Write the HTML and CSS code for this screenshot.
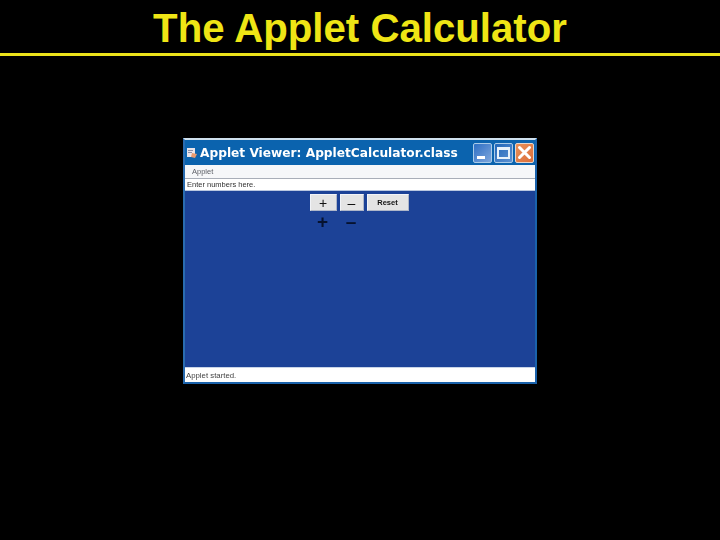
FILE: index.html
```html
<!DOCTYPE html>
<html lang="en">
<head>
<meta charset="utf-8">
<title>The Applet Calculator</title>
<link rel="stylesheet" href="styles.css">
</head>
<body>
<header class="slide-head"><h1>The Applet Calculator</h1></header>
<main class="stage">
  <section class="window">
    <div class="titlebar">
      <svg class="app-icon" width="12" height="12" viewBox="0 0 12 12"><rect x="2" y="1" width="8" height="9" fill="#e8e4ea"/><rect x="3" y="3" width="5" height="1" fill="#8a8fa8"/><rect x="3" y="5" width="4" height="1" fill="#8a8fa8"/><path d="M7 6l5 1-2 4-4-1z" fill="#e89a70"/></svg>
      <span class="title-text">Applet Viewer: AppletCalculator.class</span>
      <div class="controls">
        <span class="ctl ctl-min"><i></i></span>
        <span class="ctl ctl-max"><i></i></span>
        <span class="ctl ctl-close"><svg width="17" height="17" viewBox="0 0 17 17"><path d="M3.5 3.5l10 10M13.5 3.5l-10 10" stroke="#fff" stroke-width="3" stroke-linecap="round"/></svg></span>
      </div>
    </div>
    <div class="menubar"><span>Applet</span></div>
    <div class="prompt">Enter numbers here.</div>
    <div class="content">
      <div class="calc">
        <button class="btn btn-sym" type="button">+</button>
        <button class="btn btn-sym" type="button">–</button>
        <button class="btn btn-reset" type="button">Reset</button>
        <span class="result">+</span>
        <span class="result">–</span>
      </div>
    </div>
    <div class="status">Applet started.</div>
  </section>
</main>
</body>
</html>
```
FILE: styles.css
```css
* { box-sizing: border-box; }
html, body { margin: 0; height: 100%; }
body { width: 720px; height: 540px; background: #000; overflow: hidden; font-family: "Liberation Sans", Arial, sans-serif; }

.slide-head { height: 56px; border-bottom: 3px solid #ece21a; }
.slide-head h1 { margin: 0; height: 53px; font-size: 40.2px; line-height: 57px; font-weight: 700; color: #efe515; text-align: center; }

.stage { padding: 82px 0 0 183px; }

.window { width: 354px; height: 246px; display: flex; flex-direction: column; background: #1c4297; border: 2px solid #1a62ab; border-top-color: #cfe0ee; border-left-color: #2a6cb0; filter: blur(0.35px); }

.titlebar { height: 25px; flex: none; display: flex; align-items: center; background: #0b63ae; }
.app-icon { flex: none; margin-right: 3px; }
.title-text { font-family: "DejaVu Sans", sans-serif; font-weight: 700; font-size: 12.2px; color: #fff; white-space: nowrap; }
.controls { margin-left: auto; display: flex; gap: 2px; padding-right: 1px; }
.ctl { width: 19px; height: 20px; display: flex; align-items: center; justify-content: center; border: 1px solid #a9cbe8; border-radius: 2px; }
.ctl-min { background: linear-gradient(135deg, #2e6fc4, #7ea6dc); align-items: flex-end; justify-content: flex-start; padding: 0 0 3px 3px; }
.ctl-min i { display: block; width: 8px; height: 3px; background: #fff; }
.ctl-max { background: linear-gradient(135deg, #1f66b8, #5f92d2); }
.ctl-max i { display: block; width: 13px; height: 12px; border: 2px solid #e8f2fa; border-top-width: 3px; }
.ctl-close { background: linear-gradient(135deg, #e89058, #dc6f3c); border-color: #e6d6cc; }

.menubar { height: 14px; flex: none; display: flex; align-items: center; padding-left: 7px; background: #f6f7f9; border-bottom: 1px solid #a9aeb8; font-size: 7.5px; color: #5c5f66; }
.prompt { height: 12px; flex: none; padding-left: 2px; background: #fff; font-size: 7.5px; line-height: 11px; color: #333; border-bottom: 1px solid #b9c7e0; }

.content { flex: 1; display: flex; justify-content: center; padding: 3px 2px 0 0; }
.calc { display: grid; grid-template-columns: 27px 24px 42px; grid-template-rows: 17px 20px; column-gap: 3px; align-content: start; }
.btn { padding: 0; background: #e4e4e4; border: 1px solid #f2f4f8; border-right-color: #aeb6c8; border-bottom-color: #aeb6c8; color: #111; font-family: "Liberation Sans", Arial, sans-serif; }
.btn-sym { font-size: 14px; line-height: 14px; }
.btn-reset { font-size: 7.5px; font-weight: 700; }
.result { font-size: 19px; font-weight: 700; line-height: 21px; text-align: center; color: #06122e; padding-right: 1px; }

.status { height: 15px; flex: none; padding-left: 1px; background: #fff; font-size: 7.8px; line-height: 16px; color: #444; border-top: 1px solid #c8d4e8; }
```
